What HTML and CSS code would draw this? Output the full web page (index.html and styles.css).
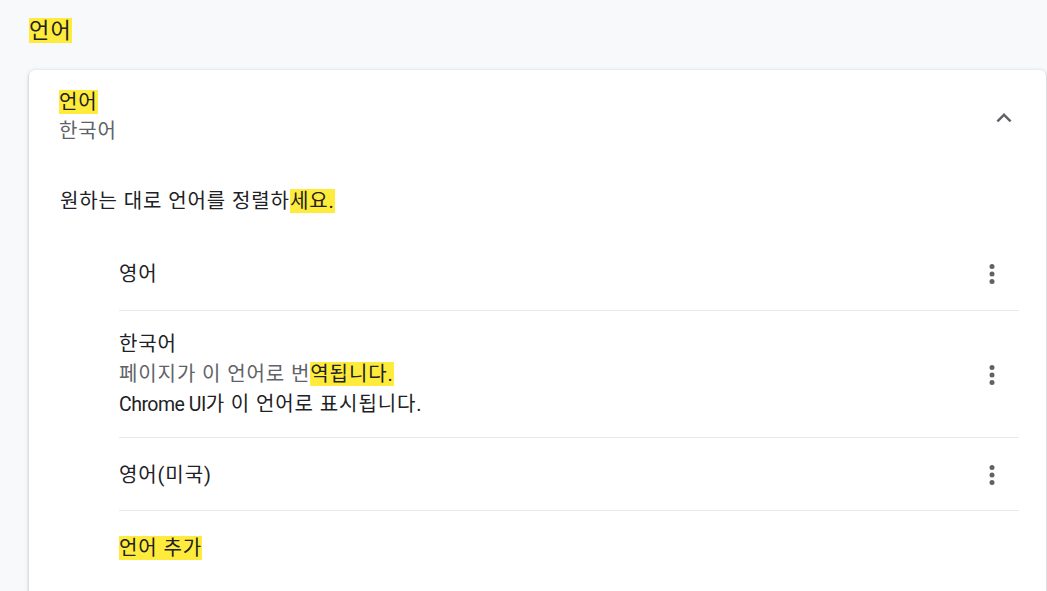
FILE: index.html
```html
<!DOCTYPE html>
<html lang="ko">
<head>
<meta charset="utf-8">
<link rel="stylesheet" href="styles.css">
</head>
<body>
<main class="page">
  <h1 class="page-title"><mark class="hl">언어</mark></h1>
  <section class="card">
    <div class="card-header">
      <div class="header-text">
        <div class="primary"><mark class="hl">언어</mark></div>
        <div class="secondary">한국어</div>
      </div>
      <button class="icon-btn chevron" aria-label="접기">
        <svg viewBox="0 0 24 24" width="30" height="30"><path d="M12 8l-6 6 1.41 1.41L12 10.83l4.59 4.58L18 14z" fill="#5f6368"/></svg>
      </button>
    </div>
    <p class="description">원하는 대로 언어를 정렬하<mark class="hl">세요.</mark></p>
    <ul class="lang-list">
      <li class="lang-row">
        <div class="lang-text"><div class="primary">영어</div></div>
        <button class="icon-btn kebab" aria-label="더보기">
          <svg viewBox="0 0 24 24" width="30" height="30"><circle cx="12" cy="6" r="2" fill="#5f6368"/><circle cx="12" cy="12" r="2" fill="#5f6368"/><circle cx="12" cy="18" r="2" fill="#5f6368"/></svg>
        </button>
      </li>
      <li class="lang-row">
        <div class="lang-text">
          <div class="primary">한국어</div>
          <div class="secondary">페이지가 이 언어로 번<mark class="hl">역됩니다.</mark></div>
          <div class="primary"><span class="latin">Chrome UI</span>가 이 언어로 표시됩니다.</div>
        </div>
        <button class="icon-btn kebab" aria-label="더보기">
          <svg viewBox="0 0 24 24" width="30" height="30"><circle cx="12" cy="6" r="2" fill="#5f6368"/><circle cx="12" cy="12" r="2" fill="#5f6368"/><circle cx="12" cy="18" r="2" fill="#5f6368"/></svg>
        </button>
      </li>
      <li class="lang-row">
        <div class="lang-text"><div class="primary">영어(미국)</div></div>
        <button class="icon-btn kebab" aria-label="더보기">
          <svg viewBox="0 0 24 24" width="30" height="30"><circle cx="12" cy="6" r="2" fill="#5f6368"/><circle cx="12" cy="12" r="2" fill="#5f6368"/><circle cx="12" cy="18" r="2" fill="#5f6368"/></svg>
        </button>
      </li>
      <li class="lang-row">
        <div class="lang-text"><div class="primary"><mark class="hl">언어 추가</mark></div></div>
      </li>
    </ul>
  </section>
</main>
</body>
</html>
```
FILE: styles.css
```css
html, body {
  margin: 0;
  padding: 0;
  background: #f8f9fa;
  overflow: hidden;
}
body {
  font-family: Roboto, "Noto Sans CJK KR", sans-serif;
  font-size: 20px;
  letter-spacing: 0.9px;
  color: #202124;
}
.page {
  padding: 15px 0 0 29px;
}
.page-title {
  margin: 0;
  font-size: 22px;
  letter-spacing: 1.2px;
  font-weight: 400;
  line-height: 31px;
  height: 31px;
}
.hl {
  background: #ffeb3b;
  color: #202124;
}
.latin {
  font-size: 19.5px;
  letter-spacing: -0.5px;
}
.card {
  margin-top: 24px;
  width: 1017px;
  background: #fff;
  border-radius: 6px;
  box-shadow: 0 1px 2px 0 rgba(60, 64, 67, 0.3), 0 1px 4px 1px rgba(60, 64, 67, 0.12);
  padding: 18px 27px 0 30px;
  box-sizing: border-box;
  min-height: 560px;
}
.card-header {
  display: flex;
  align-items: center;
  justify-content: space-between;
}
.header-text {
  line-height: 29px;
}
.secondary {
  color: #5f6368;
}
.icon-btn {
  border: 0;
  background: none;
  padding: 0;
  margin: 0;
  width: 30px;
  height: 30px;
  display: flex;
  align-items: center;
  justify-content: center;
}
.chevron {
  margin-top: 1px;
}
.description {
  margin: 40px 0 0 1px;
  line-height: 30px;
}
.lang-list {
  list-style: none;
  margin: 21px 0 0 60px;
  padding: 0;
}
.lang-row {
  display: flex;
  align-items: center;
  justify-content: space-between;
  min-height: 73px;
  padding: 18px 12px 17px 0;
  box-sizing: border-box;
  border-top: 1px solid #e8eaed;
  line-height: 30px;
}
.lang-row:first-child {
  border-top: 0;
}
.kebab {
  flex-shrink: 0;
}
```
